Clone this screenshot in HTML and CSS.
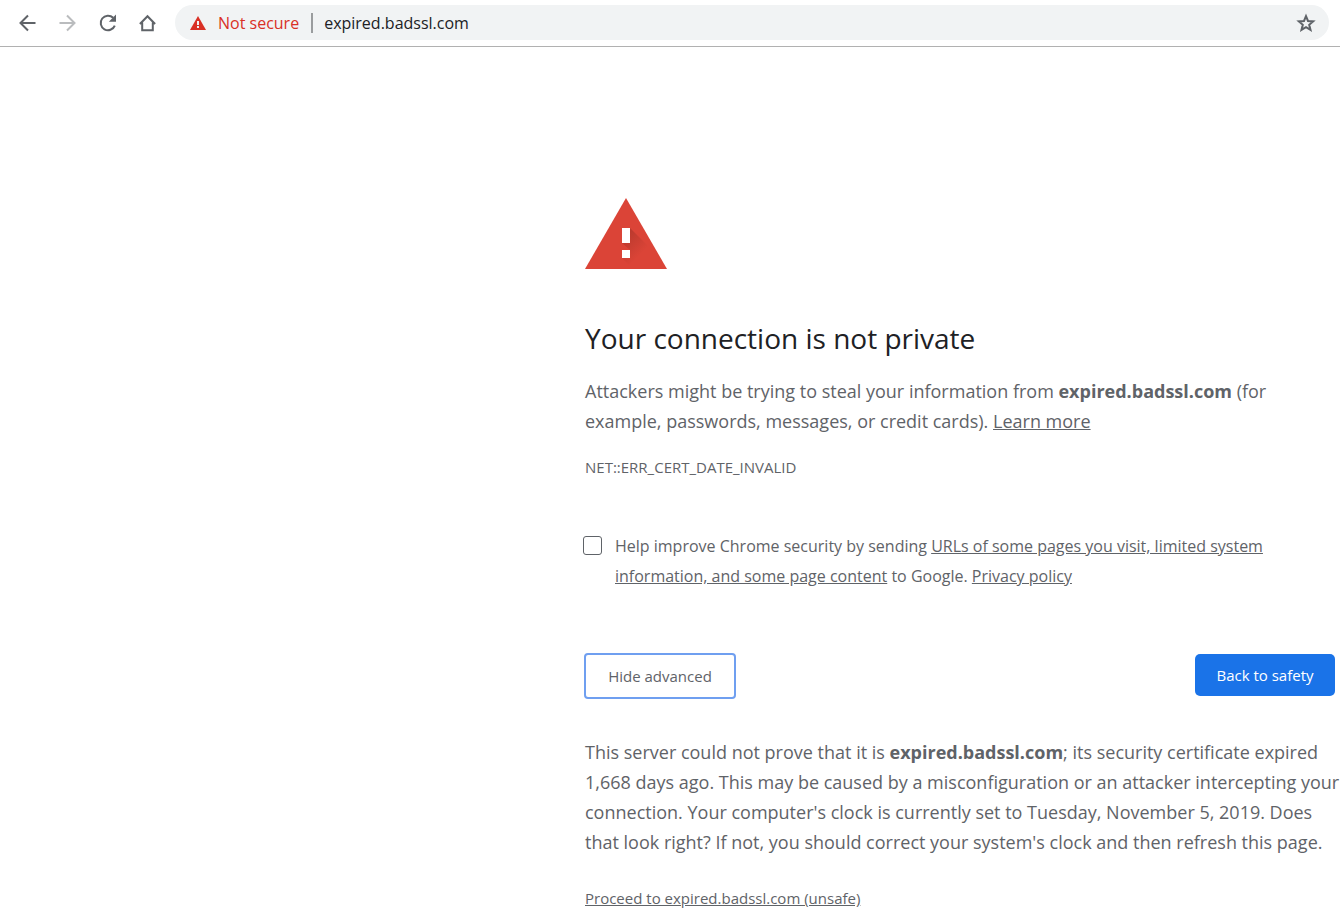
FILE: index.html
```html
<!DOCTYPE html>
<html lang="en">
<head>
  <meta charset="UTF-8" />
  <meta name="viewport" content="width=device-width, initial-scale=1.0"/>
  <title>Privacy error</title>
  <link rel="stylesheet" href="styles.css">
</head>
<body>
  <header class="toolbar">
    <button class="nav-btn" aria-label="Back">
      <svg width="20" height="20" viewBox="0 0 20 20"><path d="M17.500 10H3M10 2.500L2.500 10l7.500 7.500"/></svg>
    </button>
    <button class="nav-btn" aria-label="Forward" disabled>
      <svg width="20" height="20" viewBox="0 0 20 20"><path d="M1.500 10H16M9 2.500l7.500 7.500L9 17.500"/></svg>
    </button>
    <button class="nav-btn" aria-label="Reload">
      <svg width="20" height="20" viewBox="0 0 20 20"><path d="M16.800 12.600A7.300 7.300 0 1 1 15.200 4.800"/><path class="solid" d="M18 1.500v7.200h-7.200z"/></svg>
    </button>
    <button class="nav-btn" aria-label="Home">
      <svg width="20" height="20" viewBox="0 0 20 20"><path d="M1.900 11L9.500 3.200l7.600 7.800M4.200 9.500v7.800h10.600V9.500"/></svg>
    </button>

    <div class="address-bar">
      <svg class="warn-icon" width="16" height="14" viewBox="0 0 16 14"><path fill="#d93025" d="M8 0l8 14H0z"/><path fill="#f1f3f4" d="M7 5h2v4H7zM7 10h2v2H7z"/></svg>
      <span class="not-secure">Not secure</span>
      <input type="text" class="url" aria-label="Address" value="expired.badssl.com" />
      <button class="star-btn" aria-label="Bookmark this page">
        <svg width="20" height="20" viewBox="0 0 20 20"><path d="M10 3.200l2 4.800 5.200.4-4 3.400 1.300 5.100-4.500-2.800-4.500 2.800 1.300-5.100-4-3.400 5.200-.4z"/></svg>
      </button>
    </div>
  </header>

  <main class="interstitial">
    <svg class="big-icon" width="82" height="71" viewBox="0 0 82 71">
      <defs>
        <linearGradient id="shade" gradientUnits="userSpaceOnUse" x1="41" y1="37" x2="58" y2="54">
          <stop offset="0" stop-color="#bb3a2e"/>
          <stop offset="1" stop-color="#db4437"/>
        </linearGradient>
      </defs>
      <path fill="#db4437" d="M41 0l41 71H0z"/>
      <path fill="url(#shade)" d="M45 30l25 25 9 16H48l-11-11 8-8-8-7z"/>
      <path fill="#fff" d="M37 30h8v15h-8zM37 52h8v8h-8z"/>
    </svg>

    <h1>Your connection is not private</h1>
    <p class="text">Attackers might be trying to steal your information from <strong>expired.badssl.com</strong> (for example, passwords, messages, or credit cards). <a href="#">Learn more</a></p>
    <p class="error-code">NET::ERR_CERT_DATE_INVALID</p>

    <div class="opt-in">
      <input type="checkbox" id="report" />
      <label for="report">Help improve Chrome security by sending <a href="#">URLs of some pages you visit, limited system information, and some page content</a> to Google. <a href="#">Privacy policy</a></label>
    </div>

    <div class="button-group">
      <button class="details-btn">Hide advanced</button>
      <button class="safety-btn">Back to safety</button>
    </div>

    <p class="text details">This server could not prove that it is <strong>expired.badssl.com</strong>; its security certificate expired<br>
      1,668 days ago. This may be caused by a misconfiguration or an attacker intercepting your<br>
      connection. Your computer's clock is currently set to Tuesday, November 5, 2019. Does<br>
      that look right? If not, you should correct your system's clock and then refresh this page.</p>
    <p class="proceed"><a href="#">Proceed to expired.badssl.com (unsafe)</a></p>
  </main>
</body>
</html>
```

FILE: styles.css
```css
* {
  margin: 0;
  padding: 0;
  box-sizing: border-box;
}

body {
  font-family: "Segoe UI", "Open Sans", "Noto Sans", sans-serif;
  font-size: 15px;
  line-height: 30px;
  color: #5f6368;
  background-color: #fff;
}

button {
  font-family: inherit;
  border: none;
  background: none;
  cursor: pointer;
}

a {
  color: inherit;
  text-decoration: underline;
}

/* browser toolbar */
.toolbar {
  display: flex;
  align-items: center;
  gap: 20px;
  height: 47px;
  padding: 0 11px 1px 18px;
  border-bottom: 1px solid #b1b1b1;
}

.nav-btn,
.star-btn {
  display: flex;
  color: #5f6368;
}

.nav-btn:disabled {
  color: #babcbe;
}

.nav-btn path,
.star-btn path {
  fill: none;
  stroke: currentColor;
  stroke-width: 2;
}

.nav-btn .solid {
  fill: currentColor;
  stroke: none;
}

.address-bar {
  flex: 1;
  display: flex;
  align-items: center;
  height: 35px;
  margin-left: -3px;
  padding: 0 13px 0 15px;
  border-radius: 18px;
  background-color: #f1f3f4;
  font-size: 16px;
}

.not-secure {
  margin-left: 12px;
  padding-right: 12px;
  line-height: 20px;
  color: #d93025;
  border-right: 2px solid #9a9c9e;
}

.url {
  flex: 1;
  min-width: 0;
  padding-left: 11px;
  font-family: inherit;
  font-size: 16px;
  color: #202124;
  border: none;
  outline: none;
  background: none;
}

/* warning page */
.interstitial {
  max-width: 750px;
  margin: 151px 5px 0 auto;
}

.big-icon {
  display: block;
}

h1 {
  margin: 49px 0 18px;
  font-size: 28px;
  font-weight: 400;
  line-height: 40px;
  color: #202124;
}

.text {
  font-size: 18px;
}

.error-code {
  margin-top: 16px;
}

.opt-in {
  display: flex;
  align-items: flex-start;
  gap: 13px;
  margin-top: 49px;
  margin-left: -2px;
  font-size: 16px;
}

.opt-in input {
  appearance: none;
  flex: none;
  width: 19px;
  height: 19px;
  margin-top: 5px;
  border: 1px solid #5f6368;
  border-radius: 3px;
}

.button-group {
  display: flex;
  justify-content: space-between;
  align-items: flex-start;
  margin: 63px 0 39px;
}

.button-group button {
  height: 42px;
  min-width: 140px;
  padding: 0 20px;
  border-radius: 5px;
  font-size: 15px;
}

.button-group .details-btn {
  height: 44px;
  min-width: 150px;
  border-radius: 3px;
  color: #5f6368;
  outline: 2px solid #6f9ff0;
  outline-offset: -1px;
}

.button-group .safety-btn {
  color: #fff;
  background-color: #1a73e8;
}

@media (min-width: 800px) {
  .details {
    white-space: nowrap;
  }
}

.proceed {
  margin-top: 26px;
}
```
